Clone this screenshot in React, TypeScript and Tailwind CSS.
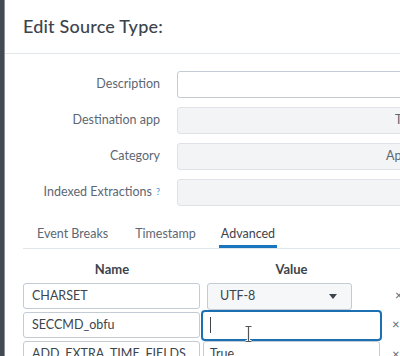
import React from "react";

const font = { fontFamily: "Lato, 'Open Sans', sans-serif" };

function FormRow({ label, help, gray, text, pl }: { label: string; help?: boolean; gray?: boolean; text?: string; pl?: number }) {
  return (
    <div className="flex items-center h-[27px]">
      <div className="w-[137px] shrink-0 text-right text-[12.5px] text-[#5c6773]">
        {label}
        {help && <sup className="text-[#3b99d9] text-[9px] ml-[4px] relative -top-[1px]">?</sup>}
      </div>
      <div
        className={`ml-[17px] shrink-0 w-[300px] h-[27px] rounded-[3px] border ${gray ? "bg-[#f2f4f5] border-[#dfe3e8]" : "bg-white border-[#c3cbd4]"} flex items-center text-[12.5px] text-[#5c6773]`}
        style={pl !== undefined ? { paddingLeft: pl } : undefined}
      >
        {text}
      </div>
    </div>
  );
}

export default function App() {
  return (
    <div className="w-[400px] h-[356px] overflow-hidden flex bg-white" style={font}>
      <div className="w-[4px] shrink-0 bg-[#434a52]" />
      <div className="w-[1px] shrink-0 bg-[#8a9199]" />
      <div className="flex-1 min-w-0 overflow-hidden flex flex-col">
        <div className="h-[54px] shrink-0 border-b border-[#e1e6eb] flex items-center pl-[18px]">
          <div className="text-[18px] font-medium text-[#3c444d] whitespace-nowrap tracking-[0.2px]">Edit Source Type:</div>
        </div>
        <div className="pt-[17px] flex flex-col gap-[9px] pl-[18px]">
          <FormRow label="Description" />
          <FormRow label="Destination app" gray text="T" pl={217} />
          <FormRow label="Category" gray text="Ap" pl={208} />
          <FormRow label="Indexed Extractions" help gray />
        </div>
        <div className="mt-[14px] ml-[18px] w-[400px] border-b border-[#e1e6eb] flex h-[29px] text-[12.5px] text-[#5c6773] shrink-0">
          <div className="px-[14px] flex items-center whitespace-nowrap">Event Breaks</div>
          <div className="pl-[13px] pr-[12px] flex items-center whitespace-nowrap">Timestamp</div>
          <div className="px-[11px] flex items-end whitespace-nowrap">
            <div className="h-[28px] px-[2px] flex items-center border-b-[3px] border-[#1a75bc] text-[#3c444d] pt-[3px]">Advanced</div>
          </div>
        </div>
        <div className="ml-[18px] w-[400px]">
          <div className="flex h-[34px] items-end pb-[4px] text-[13px] font-bold text-[#3c444d]">
            <div className="w-[178px] text-center">Name</div>
            <div className="w-[181px] text-center">Value</div>
          </div>
          <div className="flex flex-col gap-[3px]">
            <div className="flex items-center h-[26px]">
              <div className="w-[177px] h-[26px] border border-[#c3cbd4] rounded-[3px] bg-white flex items-center pl-[8px] text-[12.5px] text-[#3c444d]">CHARSET</div>
              <div className="w-[4px]" />
              <div className="w-[183px] pl-[3px] pr-[35px]">
                <div className="h-[27px] border border-[#c3cbd4] rounded-[3px] bg-[#f5f7f8] flex items-center pl-[12px] pr-[14px] text-[12.5px] text-[#3c444d] justify-between">
                  <span>UTF-8</span>
                  <svg width="8" height="5" viewBox="0 0 8 5"><path d="M0 0h8L4 5z" fill="#3c444d" /></svg>
                </div>
              </div>
              <div className="ml-[8px] text-[13px] text-[#5c6773]">×</div>
            </div>
            <div className="flex items-center h-[26px]">
              <div className="w-[177px] h-[26px] border border-[#c3cbd4] rounded-[3px] bg-white flex items-center pl-[8px] text-[12.5px] text-[#3c444d]">SECCMD_obfu</div>
              <div className="w-[1px]" />
              <div className="relative w-[181px] h-[31px] border-[2px] border-[#1c6fb0] rounded-[4px] bg-white flex items-center pl-[7px]">
                <div className="w-[1px] h-[16px] bg-[#3c444d]" />
                <svg className="absolute left-[42px] top-[14px]" width="7" height="16" viewBox="0 0 7 16">
                  <path d="M0.5 0.5h6M3.5 0.5v15M0.5 15.5h6" stroke="#ffffff" strokeWidth="3" fill="none" />
                  <path d="M0.5 0.5h6M3.5 0.5v15M0.5 15.5h6" stroke="#555" strokeWidth="1.2" fill="none" />
                </svg>
              </div>
              <div className="ml-[10px] text-[13px] text-[#5c6773]">×</div>
            </div>
            <div className="flex items-start h-[26px]">
              <div className="w-[177px] h-[26px] border border-[#c3cbd4] rounded-[3px] bg-white flex items-center pl-[8px] text-[12.5px] text-[#3c444d] whitespace-nowrap overflow-hidden">ADD_EXTRA_TIME_FIELDS</div>
              <div className="w-[3px]" />
              <div className="w-[177px] h-[26px] border border-[#c3cbd4] rounded-[3px] bg-white flex items-center pl-[6px] text-[12.5px] text-[#3c444d]">True</div>
              <div className="ml-[12px] text-[13px] text-[#5c6773] mt-[4px]">×</div>
            </div>
          </div>
        </div>
      </div>
    </div>
  );
}
